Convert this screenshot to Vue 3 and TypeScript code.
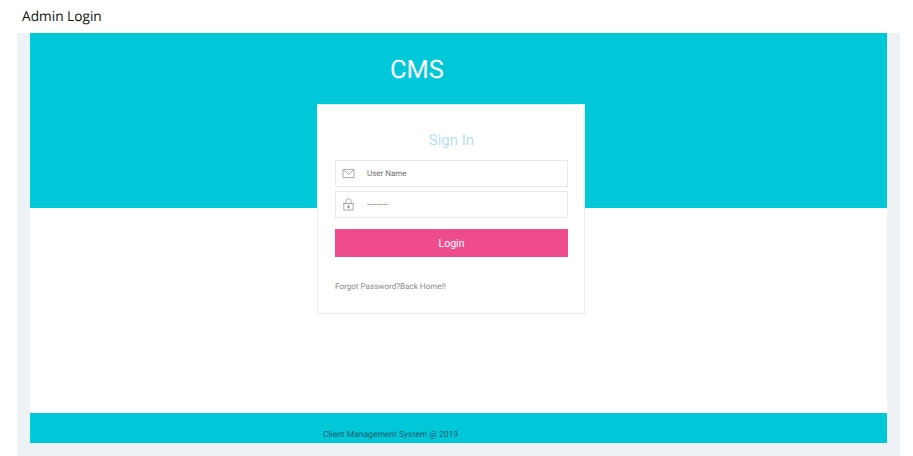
<script setup lang="ts">
const title = 'Admin Login'
</script>

<template>
  <div class="page">
    <header class="page-title">{{ title }}</header>
    <div class="frame">
      <main class="panel">
        <div class="login-wrap">
          <h1 class="brand">CMS</h1>
          <form class="card" @submit.prevent>
            <h2 class="card-title">Sign In</h2>
            <div class="field">
              <svg class="field-icon" viewBox="0 0 14 12" width="13" height="11">
                <path d="M1 1.5h12v9H1z M1 1.5l6 5.5 6-5.5" fill="none" stroke="#a3a3a3" stroke-width="1" />
              </svg>
              <span class="field-text">User Name</span>
            </div>
            <div class="field">
              <svg class="field-icon" viewBox="0 0 14 14" width="13" height="13">
                <path d="M2 6h10v7H2z M4.2 6V3.6a2.8 2.8 0 0 1 5.6 0V6" fill="none" stroke="#a3a3a3" stroke-width="1" />
                <path d="M1 6h12" stroke="#a3a3a3" stroke-width="1" />
                <rect x="6" y="8" width="2" height="3.2" fill="#888" />
              </svg>
              <span class="field-text field-text--dots">.........</span>
            </div>
            <button class="login-btn" type="button">Login</button>
            <p class="links">Forgot Password?Back Home!!</p>
          </form>
        </div>
      </main>
      <footer class="foot">Client Management System @ 2019</footer>
    </div>
  </div>
</template>

<style>
html,
body {
  margin: 0;
  background: #fff;
  overflow: hidden;
}
</style>

<style scoped>
.page {
  width: 913px;
  height: 456px;
  display: flex;
  flex-direction: column;
  font-family: Roboto, "Liberation Sans", sans-serif;
  text-rendering: geometricPrecision;
}

.page-title {
  height: 33px;
  box-sizing: border-box;
  padding: 8px 0 0 22px;
  font-family: "Open Sans", "Liberation Sans", sans-serif;
  font-size: 13.7px;
  line-height: 18px;
  color: #111;
}

.frame {
  flex: 1;
  margin: 0 13px 0 17px;
  padding: 0 13px 13px;
  background: #eff2f5;
  display: flex;
  flex-direction: column;
}

.panel {
  height: 380px;
  background: linear-gradient(#00c8d9 175px, #fff 175px);
  padding-left: 287px;
}

.login-wrap {
  width: 268px;
}

.brand {
  margin: 0;
  height: 71px;
  width: 200px;
  padding-top: 21px;
  box-sizing: border-box;
  text-align: center;
  font-size: 25.5px;
  font-weight: 400;
  line-height: 32px;
  color: #fff;
}

.card {
  height: 210px;
  box-sizing: border-box;
  padding: 26px 16px 0 17px;
  background: #fff;
  border: 1px solid #e9ecef;
}

.card-title {
  margin: 0 0 11px;
  text-align: center;
  font-size: 15px;
  font-weight: 400;
  line-height: 18px;
  color: #b7dfea;
}

.field {
  height: 27px;
  box-sizing: border-box;
  margin-bottom: 4px;
  padding-left: 6px;
  display: flex;
  align-items: center;
  background: #fff;
  border: 1px solid #e8eaec;
}

.field-icon {
  flex: none;
}

.field-text {
  margin-left: 12px;
  font-size: 8px;
  color: #6f6f6f;
}

.field-text--dots {
  font-size: 8px;
  font-weight: 700;
  line-height: 8px;
  margin-bottom: 3px;
}

.login-btn {
  display: block;
  width: 100%;
  height: 28px;
  margin-top: 11px;
  padding: 0;
  border: 0;
  background: #ee4c8c;
  color: #fff;
  font-family: inherit;
  font-size: 10.5px;
}

.links {
  margin: 23px 0 0;
  font-size: 8.1px;
  line-height: 12px;
  color: #8a8a8a;
}

.foot {
  height: 30px;
  box-sizing: border-box;
  padding: 16px 0 0 293px;
  background: #00c8d9;
  font-size: 8.5px;
  line-height: 13px;
  color: #0e5b6b;
}
</style>
